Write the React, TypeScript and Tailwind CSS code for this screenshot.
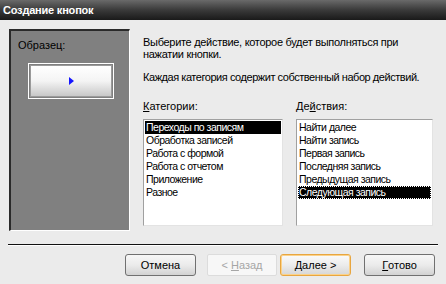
import React from "react";

const categories = [
  "Переходы по записям",
  "Обработка записей",
  "Работа с формой",
  "Работа с отчетом",
  "Приложение",
  "Разное",
];

const actions = [
  "Найти далее",
  "Найти запись",
  "Первая запись",
  "Последняя запись",
  "Предыдущая запись",
  "Следующая запись",
];

function ListBox({ items, selected, focus }: { items: string[]; selected: number; focus?: boolean }) {
  return (
    <div className="h-[107px] border border-t-[#a0a0a0] border-l-[#a0a0a0] border-r-[#e3e3e3] border-b-[#e3e3e3] bg-white p-px text-[10.5px] tracking-[-0.5px]">
      {items.map((item, i) => (
        <div
          key={item}
          className={
            i === selected
              ? "h-[13px] leading-[13px] px-[1px] whitespace-nowrap bg-black text-white" +
                (focus ? " outline outline-1 outline-dotted outline-[#ffffff] -outline-offset-1" : "")
              : "h-[13px] leading-[13px] px-[1px] whitespace-nowrap text-black"
          }
        >
          {item}
        </div>
      ))}
    </div>
  );
}

function WizButton({
  children,
  disabled,
  primary,
}: {
  children: React.ReactNode;
  disabled?: boolean;
  primary?: boolean;
}) {
  if (disabled) {
    return (
      <div className="w-[70px] h-[22px] flex items-center justify-center rounded-[2px] border border-[#dcdcdc] bg-[#f7f7f7] text-[#a6a6a6]">
        {children}
      </div>
    );
  }
  return (
    <div
      className={
        primary
          ? "w-[71px] h-[22px] flex items-center justify-center rounded-[3px] border border-[#e8a640] bg-gradient-to-b from-[#fbfbfb] via-[#ececec] to-[#d6d6d6] shadow-[inset_0_0_0_1px_#fbd28a] text-black"
          : "w-[71px] h-[22px] flex items-center justify-center rounded-[3px] border border-[#707070] bg-gradient-to-b from-[#f7f7f7] via-[#ebebeb] to-[#d2d2d2] text-black"
      }
    >
      {children}
    </div>
  );
}

export default function App() {
  return (
    <div
      className="w-[446px] h-[284px] overflow-hidden bg-[#ebebeb] text-[11px] text-black"
      style={{ fontFamily: '"Liberation Sans", Arial, sans-serif' }}
    >
      {/* Title bar */}
      <div className="h-[20px] flex items-center px-[3px] bg-gradient-to-b from-[#6a6a6a] via-[#3a3a3a] to-[#1a1a1a] text-white text-[11px] font-bold tracking-[-0.2px]">
        Создание кнопок
      </div>

      {/* Body */}
      <div className="flex pt-[9px] pl-[9px]">
        <div className="w-[121px] h-[202px] bg-[#808080] border-t-2 border-l-2 border-t-[#2a2a2a] border-l-[#2a2a2a] border-r border-b border-r-white border-b-white">
          <div className="pl-[7px] pt-[8px] leading-[13px]">Образец:</div>
          <div className="mt-[11px] ml-[17px] w-[86px] h-[36px] border border-white p-px">
            <div className="w-full h-full border border-[#9a9a9a] bg-gradient-to-b from-[#ffffff] via-[#f4f4f4] to-[#c8c8c8] flex items-center justify-center">
              <svg width="5" height="8" viewBox="0 0 5 8">
                <path d="M0 0 L5 4 L0 8 Z" fill="#1515ff" />
              </svg>
            </div>
          </div>
        </div>

        <div className="ml-[13px] w-[294px] pt-[7px] tracking-[-0.3px]">
          <div className="leading-[12px] whitespace-nowrap">
            Выберите действие, которое будет выполняться при
            <br />
            нажатии кнопки.
          </div>
          <div className="mt-[11px] leading-[12px] whitespace-nowrap tracking-[-0.45px]">
            Каждая категория содержит собственный набор действий.
          </div>
          <div className="mt-[17px] flex gap-[13px] tracking-normal">
            <div className="w-[140px]">
              <div className="leading-[13px] mb-[6px]">
                <span className="underline">К</span>атегории:
              </div>
              <ListBox items={categories} selected={0} />
            </div>
            <div className="w-[137px]">
              <div className="leading-[13px] mb-[6px]">
                Де<span className="underline">й</span>ствия:
              </div>
              <ListBox items={actions} selected={5} focus />
            </div>
          </div>
        </div>
      </div>

      {/* Separator */}
      <div className="mt-[13px] mx-[8px] h-[2px] bg-[#111111] border-b border-white" />

      {/* Buttons */}
      <div className="mt-[8px] flex pl-[125px]">
        <WizButton>Отмена</WizButton>
        <div className="ml-[11px]">
          <WizButton disabled>
            &lt; <span className="underline ml-[3px]">Н</span>азад
          </WizButton>
        </div>
        <div className="ml-[3px]">
          <WizButton primary>
            <span className="underline">Д</span>алее &gt;
          </WizButton>
        </div>
        <div className="ml-[13px]">
          <WizButton>
            <span className="underline">Г</span>отово
          </WizButton>
        </div>
      </div>
    </div>
  );
}
